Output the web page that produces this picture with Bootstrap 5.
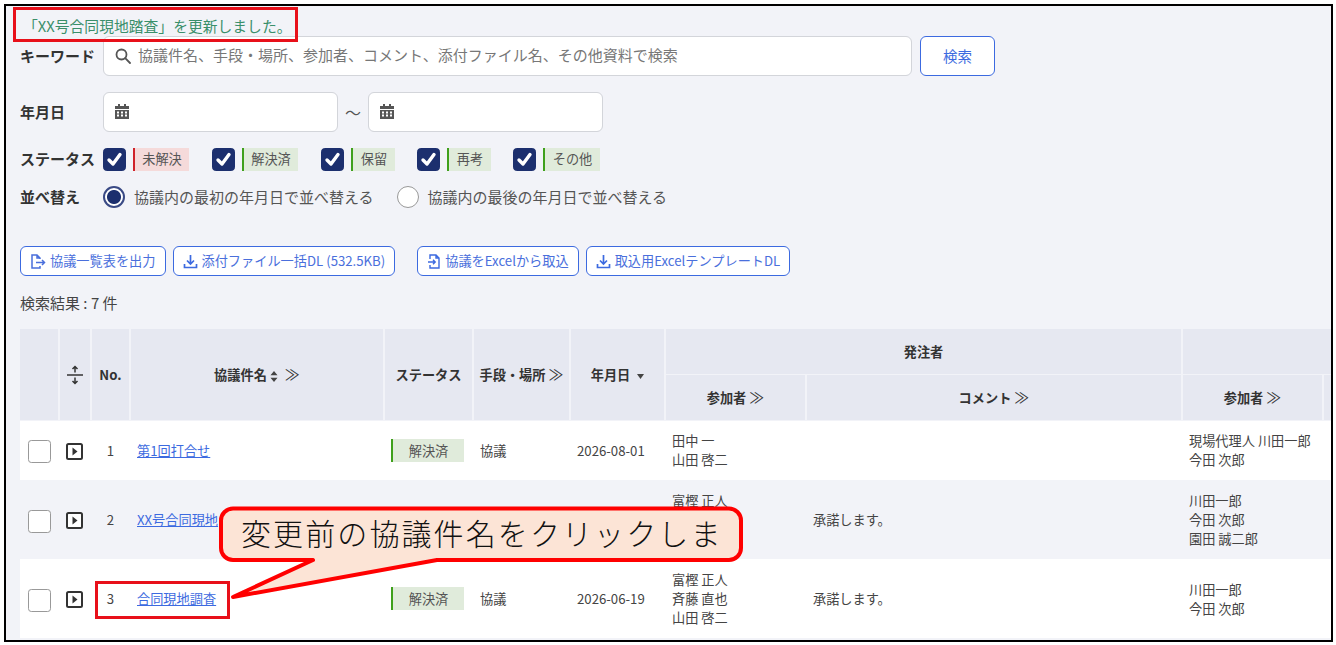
<!DOCTYPE html>
<html lang="ja">
<head>
  <meta charset="UTF-8" />
  <title>協議一覧</title>
  <link href="https://cdn.jsdelivr.net/npm/bootstrap@5.3.3/dist/css/bootstrap.min.css" rel="stylesheet">
  <style>
    html, body { height: 100%; overflow: hidden; }
    body {
      margin: 0;
      background: #fff;
      color: #444;
      font-family: "Noto Sans CJK JP", "Noto Sans", sans-serif;
      font-size: 15px;
    }
    .frame {
      position: relative;
      width: 1329px;
      height: 638px;
      margin: 4px 0 0 4px;
      padding: 10px 0 0 14px;
      border: 2px solid #000;
      background: #f2f3f8;
      overflow: hidden;
    }
    .msg { height: 20px; line-height: 20px; padding-left: 3px; font-size: 14.8px; color: #3a8f6a; }
    .lbl { width: 83px; flex: none; font-weight: 700; color: #333; font-size: 15px; white-space: nowrap; }
    .search-row { height: 40px; }
    .date-row { height: 40px; margin-top: 16px; }
    .status-row { height: 24px; margin-top: 15px; }
    .sort-row { height: 22px; margin-top: 15px; }
    .field { position: relative; }
    .field svg { position: absolute; left: 12px; top: 12px; }
    .field .form-control {
      height: 40px;
      padding: 0 12px 4px 34px;
      border-color: #d3d5da;
      border-radius: 6px;
      font-size: 15px;
    }
    .field .form-control::placeholder { color: #777; }
    .w-key { width: 809px; }
    .w-date { width: 235px; }
    .tilde { width: 30px; text-align: center; font-size: 16px; color: #555; }
    .btn-find {
      width: 75px;
      height: 40px;
      margin-left: 8px;
      padding: 0;
      font-size: 14.5px;
      color: #3c6ae0;
      border-color: #3c6ae0;
      background: #fff;
      border-radius: 6px;
    }
    .chk {
      width: 23px;
      height: 23px;
      margin: 0 7px 0 0;
      flex: none;
      border-color: #aaa;
      border-radius: 3px;
    }
    .chk:checked {
      background-color: #1c2f6e;
      border-color: #1c2f6e;
      background-size: 23px 23px;
      background-image: url("data:image/svg+xml,%3csvg xmlns='http://www.w3.org/2000/svg' viewBox='0 0 23 23'%3e%3cpath fill='none' stroke='%23fff' stroke-width='3.4' stroke-linecap='round' stroke-linejoin='round' d='M6 12l4 4 7-9.500'/%3e%3c/svg%3e");
    }
    .tag {
      display: inline-flex;
      align-items: center;
      justify-content: center;
      height: 23px;
      color: #555;
      font-size: 13.2px;
      border-left: 2px solid #3fa01c;
      background: #e0ebdb;
    }
    .tag-red { border-left-color: #d0222a; background: #f5dada; }
    .st-a { width: 56px; margin-right: 23px; }
    .st-b { width: 44px; margin-right: 22px; }
    .st-c { width: 57px; }
    .rad {
      width: 22px;
      height: 22px;
      margin: 0 9px 0 0;
      flex: none;
      border: 1px solid #999;
      background-image: none;
    }
    .rad:checked {
      border: 2px solid #3a4a85;
      background: radial-gradient(circle, #1c2f6e 0 6.5px, #fff 7.5px);
    }
    .rad-lbl { margin-right: 23px; font-size: 15px; color: #555; }
    .tool-row { margin-top: 38px; height: 30px; }
    .tool {
      display: inline-flex;
      align-items: center;
      gap: 4px;
      height: 30px;
      padding: 0 9px;
      margin-right: 7px;
      font-size: 13.2px;
      color: #4a6fdc;
      background: #fff;
      border-color: #3c6ae0;
      border-radius: 6px;
      white-space: nowrap;
    }
    .tool-gap { margin-left: 15px; }
    .count { height: 20px; line-height: 20px; margin-top: 17px; font-size: 15px; color: #444; }
    .tbl-wrap { margin-top: 16px; overflow: hidden; }
    .mtg {
      width: 1363px;
      margin: 0;
      table-layout: fixed;
      font-size: 13.2px;
      line-height: 19px;
      --bs-table-color: #444;
      --bs-table-bg: #fff;
    }
    .mtg col:nth-child(1) { width: 39px; }
    .mtg col:nth-child(2) { width: 32px; }
    .mtg col:nth-child(3) { width: 39px; }
    .mtg col:nth-child(4) { width: 254px; }
    .mtg col:nth-child(5) { width: 89px; }
    .mtg col:nth-child(6) { width: 97px; }
    .mtg col:nth-child(7) { width: 95px; }
    .mtg col:nth-child(8) { width: 141px; }
    .mtg col:nth-child(9) { width: 376px; }
    .mtg col:nth-child(10) { width: 141px; }
    .mtg col:nth-child(11) { width: 60px; }
    .mtg th {
      height: 45px;
      padding: 0 4px;
      text-align: center;
      vertical-align: middle;
      font-weight: 700;
      color: #333;
      background: #e6e8f1;
      border-width: 0 2px 1px 0;
      border-style: solid;
      border-color: #f2f3f8;
      white-space: nowrap;
    }
    .mtg .sub-head th { height: 46px; }
    .mtg td {
      padding: 0 7px;
      vertical-align: middle;
      border: 0;
    }
    .mtg .r-1 td { height: 60px; }
    .mtg .r-2 td, .mtg .r-3 td { height: 79px; }
    .mtg .r-2 { --bs-table-bg: #f2f3f8; }
    .mtg a { color: #3c6ae0; }
    .row-chk { width: 23px; height: 23px; margin: 3px 0 0 1px; border-color: #999; border-radius: 3px; display: block; }
    .row-tag { width: 73px; }
    .num { text-align: center; }
    .sh { font-weight: 400; font-size: 15px; }
    .overlay { position: absolute; left: -6px; top: -6px; pointer-events: none; }
    .balloon-txt { font-family: "Noto Sans CJK JP", sans-serif; font-size: 30px; letter-spacing: 2.1px; fill: #111; font-weight: 300; }
  </style>
</head>
<body>
  <div class="frame">
    <div class="msg">「XX号合同現地踏査」を更新しました。</div>

    <div class="d-flex align-items-center search-row">
      <div class="lbl">キーワード</div>
      <div class="field w-key">
        <svg width="16" height="16" viewBox="0 0 16 16" fill="none" stroke="#555" stroke-width="1.8"><circle cx="6.5" cy="6.5" r="5"/><path d="M10.2 10.2 15 15" stroke-linecap="round"/></svg>
        <input class="form-control" type="text" placeholder="協議件名、手段・場所、参加者、コメント、添付ファイル名、その他資料で検索">
      </div>
      <button class="btn btn-find" type="button">検索</button>
    </div>

    <div class="d-flex align-items-center date-row">
      <div class="lbl">年月日</div>
      <div class="field w-date">
        <svg width="14" height="15" viewBox="0 0 14 15" fill="#555"><path d="M3 0h2v2h4V0h2v2h3v3H0V2h3zM0 6h14v9H0zm2 1.500v2h2v-2zm4 0v2h2v-2zm4 0v2h2v-2zm-8 3v2h2v-2zm4 0v2h2v-2zm4 0v2h2v-2z" fill-rule="evenodd"/></svg>
        <input class="form-control" type="text">
      </div>
      <div class="tilde">～</div>
      <div class="field w-date">
        <svg width="14" height="15" viewBox="0 0 14 15" fill="#555"><path d="M3 0h2v2h4V0h2v2h3v3H0V2h3zM0 6h14v9H0zm2 1.500v2h2v-2zm4 0v2h2v-2zm4 0v2h2v-2zm-8 3v2h2v-2zm4 0v2h2v-2zm4 0v2h2v-2z" fill-rule="evenodd"/></svg>
        <input class="form-control" type="text">
      </div>
    </div>

    <div class="d-flex align-items-center status-row">
      <div class="lbl">ステータス</div>
      <input class="form-check-input chk" type="checkbox" checked><span class="tag tag-red st-a">未解決</span>
      <input class="form-check-input chk" type="checkbox" checked><span class="tag st-a">解決済</span>
      <input class="form-check-input chk" type="checkbox" checked><span class="tag st-b">保留</span>
      <input class="form-check-input chk" type="checkbox" checked><span class="tag st-b">再考</span>
      <input class="form-check-input chk" type="checkbox" checked><span class="tag st-c">その他</span>
    </div>

    <div class="d-flex align-items-center sort-row">
      <div class="lbl">並べ替え</div>
      <input class="form-check-input rad" type="radio" name="sort" checked><span class="rad-lbl">協議内の最初の年月日で並べ替える</span>
      <input class="form-check-input rad" type="radio" name="sort"><span class="rad-lbl">協議内の最後の年月日で並べ替える</span>
    </div>

    <div class="d-flex tool-row">
      <button class="btn tool" type="button">
        <svg width="16" height="15" viewBox="0 0 16 15" fill="none" stroke="#4a6fdc" stroke-width="1.500"><path d="M10 5V4L7 1H2v13h8v-2M7 1v3h3"/><path d="M6 8.500h8.500M12 6l2.500 2.500L12 11"/></svg>協議一覧表を出力
      </button>
      <button class="btn tool" type="button">
        <svg width="15" height="15" viewBox="0 0 15 15" fill="none" stroke="#3c6ae0" stroke-width="1.700"><path d="M7.500 1v8.500M4 6.500l3.500 3.500L11 6.500M1.500 10v3.500h12V10"/></svg>添付ファイル一括DL (532.5KB)
      </button>
      <button class="btn tool tool-gap" type="button">
        <svg width="14" height="15" viewBox="0 0 14 15" fill="none" stroke="#3c6ae0" stroke-width="1.400"><path d="M3 5V1h6l3 3v10H3v-3M9 1v3h3"/><path d="M1 8h7M6 5.800 8.200 8 6 10.200"/></svg>協議をExcelから取込
      </button>
      <button class="btn tool" type="button">
        <svg width="15" height="15" viewBox="0 0 15 15" fill="none" stroke="#3c6ae0" stroke-width="1.700"><path d="M7.500 1v8.500M4 6.500l3.500 3.500L11 6.500M1.500 10v3.500h12V10"/></svg>取込用ExcelテンプレートDL
      </button>
    </div>

    <div class="count">検索結果 : 7 件</div>

    <div class="tbl-wrap">
      <table class="table mtg">
        <colgroup><col><col><col><col><col><col><col><col><col><col><col></colgroup>
        <thead>
          <tr>
            <th rowspan="2"></th>
            <th rowspan="2"><svg width="18" height="20" viewBox="0 0 18 20" fill="none" stroke="#333" stroke-width="1.500"><path d="M1 10h16"/><path d="M9 1.500V7.500M6.500 4 9 1.500 11.500 4M9 12.500v6M6.500 16 9 18.500 11.500 16"/></svg></th>
            <th rowspan="2">No.</th>
            <th rowspan="2">協議件名 <svg width="8" height="11" viewBox="0 0 8 11" fill="#444"><path d="M4 0l3.500 4.300h-7zM4 11 .5 6.700h7z"/></svg> <span class="sh ms-1">≫</span></th>
            <th rowspan="2">ステータス</th>
            <th rowspan="2">手段・場所 <span class="sh">≫</span></th>
            <th rowspan="2">年月日 <svg class="ms-1" width="7" height="5" viewBox="0 0 7 5" fill="#444"><path d="M0 0h7L3.500 5z"/></svg></th>
            <th colspan="2">発注者</th>
            <th colspan="2"></th>
          </tr>
          <tr class="sub-head">
            <th>参加者 <span class="sh">≫</span></th>
            <th>コメント <span class="sh">≫</span></th>
            <th>参加者 <span class="sh">≫</span></th>
            <th></th>
          </tr>
        </thead>
        <tbody>
          <tr class="r-1">
            <td><input class="form-check-input row-chk" type="checkbox"></td>
            <td><svg width="17" height="17" viewBox="0 0 17 17"><rect x="1" y="1" width="15" height="15" rx="1.500" fill="#fff" stroke="#333" stroke-width="2"/><path d="M6.500 4.500 11.500 8.500 6.500 12.500z" fill="#333"/></svg></td>
            <td class="num">1</td>
            <td><a href="#">第1回打合せ</a></td>
            <td><span class="tag row-tag">解決済</span></td>
            <td>協議</td>
            <td>2026-08-01</td>
            <td>田中 一<br>山田 啓二</td>
            <td></td>
            <td>現場代理人 川田一郎<br>今田 次郎</td>
            <td></td>
          </tr>
          <tr class="r-2">
            <td><input class="form-check-input row-chk" type="checkbox"></td>
            <td><svg width="17" height="17" viewBox="0 0 17 17"><rect x="1" y="1" width="15" height="15" rx="1.500" fill="#fff" stroke="#333" stroke-width="2"/><path d="M6.500 4.500 11.500 8.500 6.500 12.500z" fill="#333"/></svg></td>
            <td class="num">2</td>
            <td><a href="#">XX号合同現地</a></td>
            <td></td>
            <td></td>
            <td></td>
            <td>富樫 正人<br>&nbsp;<br>&nbsp;</td>
            <td>承諾します。</td>
            <td>川田一郎<br>今田 次郎<br>園田 誠二郎</td>
            <td></td>
          </tr>
          <tr class="r-3">
            <td><input class="form-check-input row-chk" type="checkbox"></td>
            <td><svg width="17" height="17" viewBox="0 0 17 17"><rect x="1" y="1" width="15" height="15" rx="1.500" fill="#fff" stroke="#333" stroke-width="2"/><path d="M6.500 4.500 11.500 8.500 6.500 12.500z" fill="#333"/></svg></td>
            <td class="num">3</td>
            <td><a href="#">合同現地調査</a></td>
            <td><span class="tag row-tag">解決済</span></td>
            <td>協議</td>
            <td>2026-06-19</td>
            <td>富樫 正人<br>斉藤 直也<br>山田 啓二</td>
            <td>承諾します。</td>
            <td>川田一郎<br>今田 次郎</td>
            <td></td>
          </tr>
        </tbody>
      </table>
    </div>

    <!-- red annotations drawn over the screenshot -->
    <svg class="overlay" width="1336" height="645" viewBox="0 0 1336 645" fill="none">
      <rect x="14.500" y="8.500" width="282" height="32" stroke="#e8101a" stroke-width="3"/>
      <rect x="96.500" y="582.500" width="132" height="35" stroke="#e8101a" stroke-width="3"/>
      <path d="M233 508.500H729a12 12 0 0 1 12 12V548a12 12 0 0 1 -12 12H437L233 597 313 560H233a12 12 0 0 1 -12 -12V520.500a12 12 0 0 1 12 -12z" fill="#fce4d6" stroke="#f00" stroke-width="4" stroke-linejoin="round"/>
      <text class="balloon-txt" x="241" y="545">変更前の協議件名をクリックしま</text>
    </svg>
  </div>

  <script src="https://cdn.jsdelivr.net/npm/bootstrap@5.3.3/dist/js/bootstrap.bundle.min.js"></script>
</body>
</html>
